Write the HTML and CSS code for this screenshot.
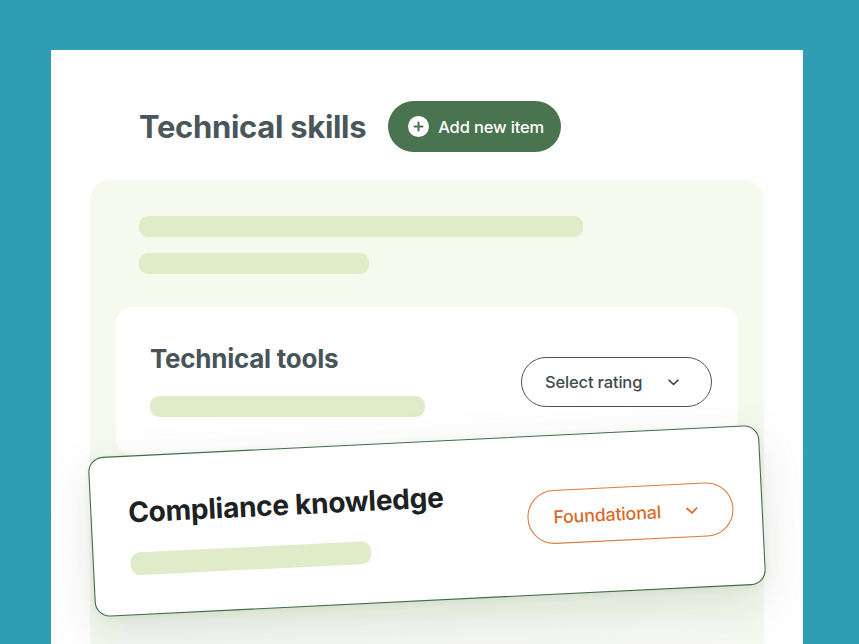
FILE: index.html
```html
<!DOCTYPE html>
<html lang="en">
<head>
<meta charset="utf-8">
<title>Technical skills</title>
<link rel="stylesheet" href="styles.css">
</head>
<body>
<main class="sheet">
  <header class="head">
    <h1 class="head-title">Technical skills</h1>
    <button class="add-btn" type="button">
      <span class="add-icon">
        <svg width="21" height="21" viewBox="0 0 21 21" aria-hidden="true">
          <circle cx="10.5" cy="10.5" r="10.5" fill="#ffffff"/>
          <path d="M10.5 6.5v8M6.5 10.5h8" stroke="#4a7350" stroke-width="2" stroke-linecap="round"/>
        </svg>
      </span>
      <span>Add new item</span>
    </button>
  </header>

  <section class="group">
    <div class="bar bar-long"></div>
    <div class="bar bar-short"></div>

    <div class="list">
      <article class="card">
        <div class="card-main">
          <h2 class="card-title">Technical tools</h2>
          <div class="bar card-bar"></div>
        </div>
        <button class="rating" type="button">
          <span>Select rating</span>
          <svg class="chev" width="11" height="7" viewBox="0 0 11 7" aria-hidden="true">
            <path d="M1 1.2l4.5 4.3L10 1.2" fill="none" stroke="currentColor" stroke-width="1.6" stroke-linecap="round" stroke-linejoin="round"/>
          </svg>
        </button>
      </article>

      <article class="card card-drag">
        <div class="card-main">
          <h2 class="card-title card-title-dark">Compliance knowledge</h2>
          <div class="bar card-bar card-bar-short"></div>
        </div>
        <button class="rating rating-orange" type="button">
          <span>Foundational</span>
          <svg class="chev" width="11" height="7" viewBox="0 0 11 7" aria-hidden="true">
            <path d="M1 1.2l4.5 4.3L10 1.2" fill="none" stroke="currentColor" stroke-width="1.6" stroke-linecap="round" stroke-linejoin="round"/>
          </svg>
        </button>
      </article>

      <article class="card card-faint"></article>
    </div>
  </section>
</main>
</body>
</html>
```

FILE: styles.css
```css
* {
  box-sizing: border-box;
}

html, body {
  margin: 0;
  padding: 0;
}

body {
  width: 859px;
  height: 644px;
  overflow: hidden;
  background: #2f9eb2;
  font-family: Inter, "Noto Sans", "Liberation Sans", sans-serif;
}

.sheet {
  margin: 50px 0 0 51px;
  width: 752px;
  height: 594px;
  overflow: hidden;
  background: #ffffff;
  padding: 51px 39px 0 39px;
}

.head {
  display: flex;
  align-items: center;
  gap: 22px;
  padding-left: 49px;
}

.head-title {
  margin: 0;
  font-size: 31px;
  font-weight: 700;
  letter-spacing: -0.01em;
  color: #4a5659;
  line-height: 40px;
}

.add-btn {
  display: flex;
  align-items: center;
  gap: 9px;
  height: 51px;
  padding: 0 17px 0 20px;
  border: none;
  border-radius: 26px;
  background: #4a7350;
  color: #ffffff;
  font-family: inherit;
  font-size: 16.5px;
  font-weight: 500;
  letter-spacing: -0.01em;
}

.add-icon {
  display: flex;
}

.group {
  margin-top: 28px;
  background: #f5f9ee;
  border-radius: 20px;
  padding: 36px 26px 40px 26px;
  min-height: 500px;
}

.bar {
  background: #e0ebca;
  border-radius: 9px;
  height: 21px;
}

.bar-long {
  width: 444px;
  margin-left: 23px;
}

.bar-short {
  width: 230px;
  margin-left: 23px;
  margin-top: 16px;
}

.list {
  margin-top: 33px;
  display: flex;
  flex-direction: column;
  gap: 8px;
}

.card {
  height: 148px;
  background: #ffffff;
  border-radius: 16px;
  padding: 38px 26px 0 34px;
  display: flex;
  justify-content: space-between;
  align-items: flex-start;
}

.card-title {
  margin: 0;
  font-size: 26px;
  font-weight: 700;
  letter-spacing: -0.01em;
  line-height: 28px;
  color: #47555a;
}

.card-title-dark {
  color: #1c2224;
}

.card-bar {
  width: 275px;
  margin-top: 23px;
}

.card-bar-short {
  width: 223px;
}

.rating {
  margin-top: 12px;
  height: 50px;
  width: 191px;
  display: flex;
  align-items: center;
  justify-content: space-between;
  padding: 0 32px 0 23px;
  border: 1px solid #4a5659;
  border-radius: 25px;
  background: #ffffff;
  color: #3f4b4f;
  font-family: inherit;
  font-size: 16.5px;
  font-weight: 500;
  letter-spacing: -0.01em;
}

.rating-orange {
  border-color: #e07a3b;
  color: #d96a2c;
}

.chev {
  display: block;
}

.card-drag {
  position: relative;
  z-index: 2;
  border: 1px solid #3f6e48;
  border-radius: 14px;
  transform: translateY(-16px) rotate(-2.8deg) scale(1.08);
  box-shadow: 0 16px 44px rgba(70, 100, 60, 0.15), 0 2px 8px rgba(40, 60, 40, 0.05);
}

.card-faint {
  background: #f7f8f6;
}
```
